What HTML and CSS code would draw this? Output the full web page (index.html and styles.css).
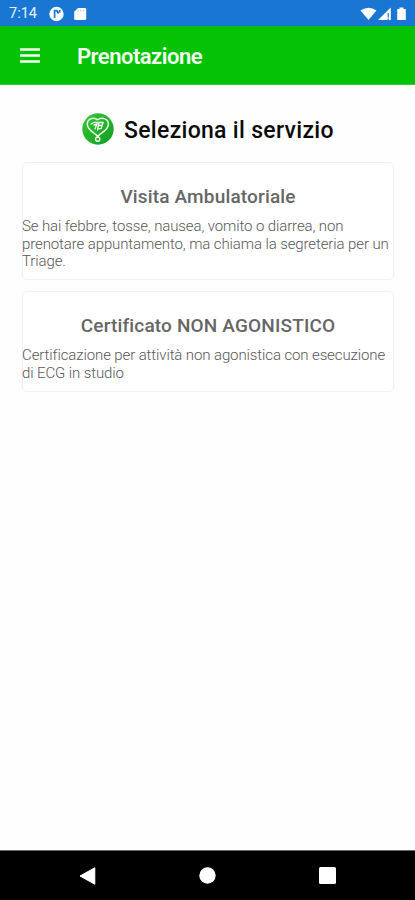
FILE: index.html
```html
<!DOCTYPE html>
<html lang="it">
<head>
<meta charset="utf-8">
<title>Prenotazione</title>
<link rel="stylesheet" href="styles.css">
</head>
<body>
<div class="status">
  <span class="time">7:14</span>
  <svg class="notifications" width="40" height="16" viewBox="0 0 40 16">
    <circle cx="7.500" cy="8" r="7.200" fill="#fff"/>
    <path d="M5.600 3.800v8M5.600 4.600h1.600q2 .2 1.800 3" fill="none" stroke="#1976d2" stroke-width="1.700"/>
    <path d="M10.800 3.800v3" stroke="#1976d2" stroke-width="1.500"/>
    <path d="M29 2h7q1.200 0 1.200 1.200v9.600q0 1.200-1.200 1.200h-9.600q-1.200 0-1.200-1.200V5.800z" fill="#fff"/>
    <path d="M29.200 3.500v2M31.700 3.500v2M34.200 3.500v2" stroke="#9cc3ee" stroke-width=".8"/>
  </svg>
  <svg class="signals" width="50" height="16" viewBox="0 0 50 16">
    <path d="M.5 4.500Q8.500-1 16.500 4.500L8.500 14z" fill="#fff"/>
    <path d="M30.800 1.500V14H18z" fill="#fff"/>
    <path d="M28.200 7v4.500M28.200 12.500v1.500" stroke="#1976d2" stroke-width="1.200"/>
    <path d="M39.500 1.500h4V3h2.300v11h-8.600V3h2.300z" fill="#fff"/>
  </svg>
</div>
<header class="appbar">
  <svg class="menu" width="20" height="15" viewBox="0 0 20 15"><path d="M0 1.500h20M0 7.500h20M0 13.500h20" stroke="#f1fff1" stroke-width="2.400"/></svg>
  <h1 class="title">Prenotazione</h1>
</header>
<main class="content">
  <div class="heading">
    <svg class="logo" width="32" height="32" viewBox="0 0 32 32">
      <defs><linearGradient id="g" x1="0" y1="0" x2="1" y2="1"><stop offset="0" stop-color="#35ca35"/><stop offset="1" stop-color="#139b22"/></linearGradient></defs>
      <circle cx="16" cy="16" r="15.700" fill="url(#g)"/>
      <g fill="none" stroke="#effff0" stroke-linecap="round" stroke-linejoin="round">
        <path d="M15.500 6.800C11 3.500 5.300 6.100 5.300 11.200c0 4.800 4.400 7 8 9.900 1.700 1.400 2.400 2 2.400 3.300 0-1.300.7-1.900 2.400-3.300 3.700-2.900 8.300-5.100 8.300-9.900 0-5.100-6-7.700-10.900-4.400" stroke-width="1.500"/>
        <circle cx="15.700" cy="26.200" r="2.100" stroke-width="1.400"/>
        <path d="M9 11l3-1.500h3.500L13 16M12 12l3-.5M17 9.500L15.500 17M17.500 9.500h3.700l-1.200 3h-2.500M20 12.500l-.8 3.200h-3" stroke-width="1.300"/>
      </g>
    </svg>
    <h2 class="heading-text">Seleziona il servizio</h2>
  </div>
  <section class="card">
    <h3 class="card-title">Visita Ambulatoriale</h3>
    <p class="desc">Se hai febbre, tosse, nausea, vomito o diarrea, non<br>prenotare appuntamento, ma chiama la segreteria per un<br>Triage.</p>
  </section>
  <section class="card short">
    <h3 class="card-title">Certificato NON AGONISTICO</h3>
    <p class="desc">Certificazione per attività non agonistica con esecuzione<br>di ECG in studio</p>
  </section>
</main>
<nav class="navbar">
  <svg width="17" height="18" viewBox="0 0 17 18"><path d="M15.800.8v16.400L1 9z" fill="#fff" stroke="#fff" stroke-linejoin="round"/></svg>
  <svg width="17" height="17" viewBox="0 0 17 17"><circle cx="8.500" cy="8.500" r="8.200" fill="#fff"/></svg>
  <svg width="17" height="17" viewBox="0 0 17 17"><rect width="17" height="17" rx="1.500" fill="#fff"/></svg>
</nav>
</body>
</html>
```
FILE: styles.css
```css
* { box-sizing: border-box; }
body {
  margin: 0;
  height: 900px;
  display: flex;
  flex-direction: column;
  overflow: hidden;
  background: #fefefe;
  font-family: Roboto, "Liberation Sans", sans-serif;
}
h1, h2, h3, p { margin: 0; }
svg { display: block; flex: none; }
.status {
  height: 26px;
  padding: 1px 5px 0 9px;
  display: flex;
  align-items: center;
  background: #1976d2;
  color: #e8f2fd;
}
.time { width: 40px; font-size: 14.5px; line-height: 18px; padding-top: 1px; white-space: nowrap; }
.signals { margin-left: auto; }
.appbar {
  height: 59px;
  padding: 3px 20px 0;
  display: flex;
  align-items: center;
  background: #05c205;
  border-bottom: 1px solid #35cc35;
}
.menu { margin-top: -3px; }
.title {
  margin-left: 37px;
  padding-top: 1px;
  font-size: 22px;
  letter-spacing: -0.5px;
  font-weight: 600;
  line-height: 28px;
  color: #f4fff4;
}
.content { flex: 1; padding: 27px 21px 0 22px; }
.heading {
  height: 34px;
  margin-bottom: 16px;
  padding-left: 60px;
  display: flex;
  align-items: center;
  gap: 10px;
}
.heading-text {
  padding-top: 3px;
  font-size: 23px;
  letter-spacing: 0.3px;
  font-weight: 500;
  line-height: 30px;
  color: #0b0b0b;
  white-space: nowrap;
}
.card {
  height: 118px;
  margin-bottom: 11px;
  padding-top: 22px;
  border: 1px solid #f0f0f0;
  border-radius: 5px;
  background: #fff;
}
.card.short { height: 101px; }
.card-title {
  margin-bottom: 9px;
  text-align: center;
  font-size: 19px;
  letter-spacing: 0.16px;
  font-weight: 500;
  line-height: 24px;
  color: #666;
  white-space: nowrap;
}
.desc {
  margin-left: -1px;
  font-size: 15px;
  letter-spacing: -0.11px;
  font-weight: 300;
  line-height: 17.5px;
  color: #585858;
  white-space: nowrap;
}
.navbar {
  height: 50px;
  padding: 0 79px;
  display: flex;
  align-items: center;
  justify-content: space-between;
  background: #000;
  border-top: 1px solid #666;
}
```
